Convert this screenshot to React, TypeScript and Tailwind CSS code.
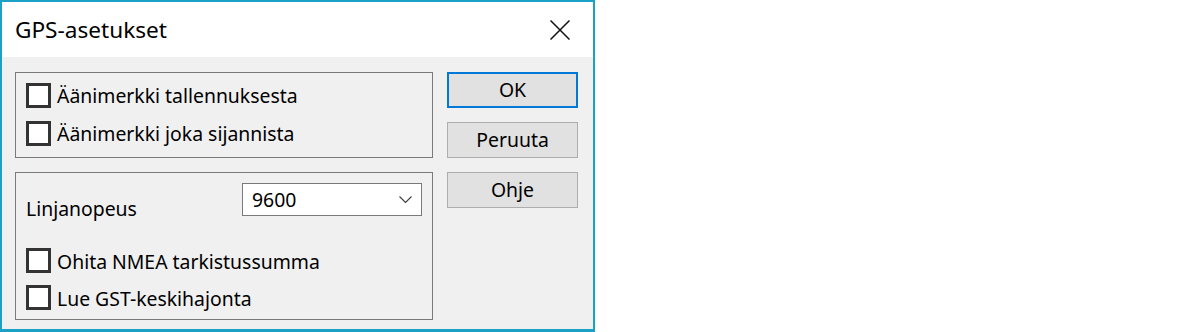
function CheckRow({ label }: { label: string }) {
  return (
    <div className="flex items-center gap-[6px] h-[25px]">
      <div className="w-[25px] h-[25px] border-[3px] border-[#333333] bg-white shrink-0" />
      <span className="leading-none mt-[1px]">{label}</span>
    </div>
  );
}

function Button({ label, primary }: { label: string; primary?: boolean }) {
  return (
    <div
      className={
        primary
          ? 'h-[36px] w-[131px] bg-[#e1e1e1] border-2 border-[#0078d7] flex items-center justify-center'
          : 'h-[36px] w-[131px] bg-[#e1e1e1] border border-[#adadad] flex items-center justify-center'
      }
    >
      {label}
    </div>
  );
}

export default function App() {
  return (
    <div className="w-[1200px] h-[332px] bg-white">
      <div className="w-[595px] h-[332px] border-2 border-b-[3px] border-[#1ba0c6] flex flex-col text-[19.4px] text-black font-['Noto_Sans',sans-serif]">
        {/* title bar */}
        <div className="h-[55px] bg-white flex items-center justify-between pl-[13px] pr-[23px] pt-[2px]">
          <span className="text-[22.6px] leading-none">GPS-asetukset</span>
          <svg width="20" height="20" viewBox="0 0 20 20" className="-mt-[2px]">
            <path d="M0.5 0.5 L19.5 19.5 M19.5 0.5 L0.5 19.5" stroke="#111" strokeWidth="1.5" />
          </svg>
        </div>

        {/* body */}
        <div className="flex-1 bg-[#f0f0f0] flex gap-[14px] pt-[15px] pl-[13px] pr-[15px]">
          <div className="w-[418px] flex flex-col gap-[14px]">
            <div className="h-[86px] border border-[#7a7a7a] pt-[10px] px-[10px] flex flex-col gap-[13px]">
              <CheckRow label="Äänimerkki tallennuksesta" />
              <CheckRow label="Äänimerkki joka sijannista" />
            </div>

            <div className="h-[148px] border border-[#7a7a7a] pt-[10px] px-[10px] flex flex-col">
              <div className="flex justify-between">
                <span className="mt-[16px] leading-none">Linjanopeus</span>
                <div className="w-[180px] h-[33px] bg-white border border-[#7a7a7a] flex items-center justify-between pl-[9px] pr-[9px]">
                  <span className="leading-none">9600</span>
                  <svg width="13" height="7" viewBox="0 0 13 7">
                    <path d="M0.5 0.5 L6.5 6.5 L12.5 0.5" fill="none" stroke="#444" strokeWidth="1.2" />
                  </svg>
                </div>
              </div>
              <div className="mt-[30px] flex flex-col gap-[12px]">
                <CheckRow label="Ohita NMEA tarkistussumma" />
                <CheckRow label="Lue GST-keskihajonta" />
              </div>
            </div>
          </div>

          <div className="w-[131px] flex flex-col gap-[14px]">
            <Button label="OK" primary />
            <Button label="Peruuta" />
            <Button label="Ohje" />
          </div>
        </div>
      </div>
    </div>
  );
}
